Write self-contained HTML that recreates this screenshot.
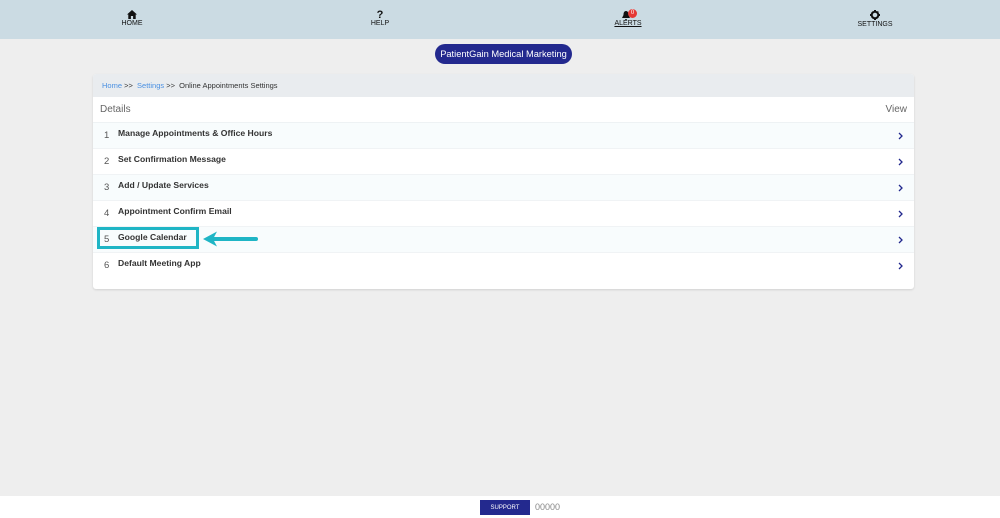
<!DOCTYPE html>
<html><head><meta charset="utf-8"><style>
*{margin:0;padding:0;box-sizing:border-box}
body{width:1000px;height:518px;background:#eeeeee;font-family:"Liberation Sans",sans-serif;position:relative;overflow:hidden}
.hdr{position:absolute;left:0;top:0;width:1000px;height:39px;background:#cbdbe3}
.nav{position:absolute;top:10px;width:80px;text-align:center;font-size:7px;color:#111}
.nav svg{display:block;margin:0 auto 1px}
.pill{position:absolute;left:435px;top:44px;width:137px;height:20px;border-radius:10px;background:#23298e;color:#fff;font-size:9.3px;text-align:center;line-height:20px}
.card{position:absolute;left:93px;top:74px;width:821px;height:215px;background:#fff;border-radius:3px;box-shadow:0 1px 2px rgba(0,0,0,.12)}
.bc{height:23px;background:#e9ecef;font-size:7.5px;color:#333;padding-left:9px;line-height:23px;border-radius:3px 3px 0 0}
.bc a{color:#4a90e2}
.det{height:26px;border-bottom:1px solid #eef2f4;font-size:10px;color:#666;line-height:26px;padding:0 7px}
.det span{float:right}
.row{position:relative;height:26px;border-bottom:1px solid #f0f3f5}
.row:last-child{border-bottom:none}
.row.o{background:#f8fcfd}
.n{position:absolute;left:11px;top:7px;font-size:9.5px;color:#555}
.t{position:absolute;left:25px;top:5px;font-size:8.6px;font-weight:bold;color:#333}
.ch{position:absolute;left:805px;top:9px}
.foot{position:absolute;left:0;top:496px;width:1000px;height:22px;background:#fff}
.sup{position:absolute;left:480px;top:500px;width:50px;height:15px;background:#23298e;color:#fff;font-size:6px;text-align:center;line-height:16px}
.zz{position:absolute;left:535px;top:502px;font-size:9px;color:#888}
</style></head><body>
<div class="hdr">
<div class="nav" style="left:92px"><svg width="10" height="9" viewBox="0 0 10 9"><path d="M5 0L0 4.5h1.3V9h2.6V6h2.2v3h2.6V4.5H10z" fill="#111"/></svg>HOME</div>
<div class="nav" style="left:340px"><div style="font-weight:bold;font-size:11px;line-height:10px">?</div>HELP</div>
<div class="nav" style="left:588px;text-decoration:underline"><div style="position:relative;height:10px"><svg width="8" height="9" viewBox="0 0 8 9" style="position:absolute;left:34px;top:1px"><path d="M4 0C2 0 1.5 2 1.5 4L0 7h8L6.5 4C6.5 2 6 0 4 0zM3 8h2a1 1 0 0 1-2 0z" fill="#111"/></svg><div style="position:absolute;left:40px;top:-1px;width:9px;height:9px;border-radius:50%;background:#e53935;color:#fff;font-size:6px;line-height:9px;text-decoration:none">0</div></div>ALERTS</div>
<div class="nav" style="left:835px"><svg width="10" height="10" viewBox="0 0 10 10"><circle cx="5" cy="5" r="3.3" fill="none" stroke="#111" stroke-width="2"/><path d="M4 0h2v2H4zM4 8h2v2H4zM0 4h2v2H0zM8 4h2v2H8zM1.2 2.6l1.4-1.4 1 1-1.4 1.4zM6.4 7.6l1.4-1.4 1 1-1.4 1.4zM1.2 7.4l1.4 1.4 1-1-1.4-1.4zM6.4 2.4l1.4-1.4 1 1-1.4 1.4z" fill="#111"/></svg>SETTINGS</div>
</div>
<div class="pill">PatientGain Medical Marketing</div>
<div class="card">
<div class="bc"><a>Home</a> &gt;&gt; &nbsp;<a>Settings</a> &gt;&gt; &nbsp;Online Appointments Settings</div>
<div class="det">Details<span>View</span></div>
<div class="row o"><span class="n">1</span><span class="t">Manage Appointments &amp; Office Hours</span><svg class="ch" width="5" height="8" viewBox="0 0 5 8"><path d="M1 1l3 3-3 3" fill="none" stroke="#23298e" stroke-width="1.3"/></svg></div>
<div class="row"><span class="n">2</span><span class="t">Set Confirmation Message</span><svg class="ch" width="5" height="8" viewBox="0 0 5 8"><path d="M1 1l3 3-3 3" fill="none" stroke="#23298e" stroke-width="1.3"/></svg></div>
<div class="row o"><span class="n">3</span><span class="t">Add / Update Services</span><svg class="ch" width="5" height="8" viewBox="0 0 5 8"><path d="M1 1l3 3-3 3" fill="none" stroke="#23298e" stroke-width="1.3"/></svg></div>
<div class="row"><span class="n">4</span><span class="t">Appointment Confirm Email</span><svg class="ch" width="5" height="8" viewBox="0 0 5 8"><path d="M1 1l3 3-3 3" fill="none" stroke="#23298e" stroke-width="1.3"/></svg></div>
<div class="row o"><span class="n">5</span><span class="t">Google Calendar</span><svg class="ch" width="5" height="8" viewBox="0 0 5 8"><path d="M1 1l3 3-3 3" fill="none" stroke="#23298e" stroke-width="1.3"/></svg></div>
<div class="row"><span class="n">6</span><span class="t">Default Meeting App</span><svg class="ch" width="5" height="8" viewBox="0 0 5 8"><path d="M1 1l3 3-3 3" fill="none" stroke="#23298e" stroke-width="1.3"/></svg></div>
</div>
<div style="position:absolute;left:97px;top:227px;width:102px;height:22px;border:3px solid #1fb5c5"></div>
<svg style="position:absolute;left:202px;top:230px" width="58" height="18" viewBox="0 0 58 18"><path d="M12 9H54" stroke="#1fb5c5" stroke-width="4" stroke-linecap="round"/><path d="M1 9L15 1.5 11 9 15 16.5z" fill="#1fb5c5"/></svg>
<div class="foot"></div>
<div class="sup">SUPPORT</div>
<div class="zz">00000</div>
</body></html>
